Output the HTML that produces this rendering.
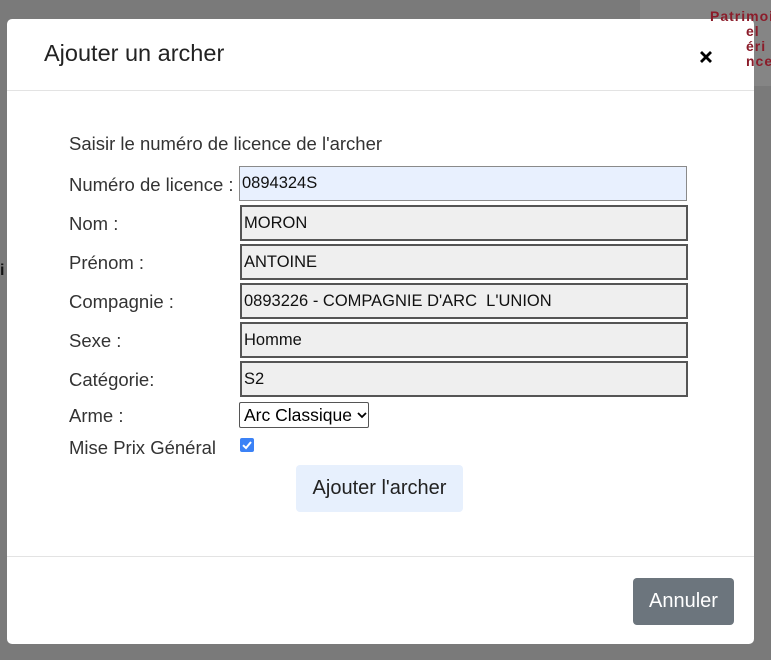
<!DOCTYPE html>
<html><head><meta charset="utf-8"><style>
body{margin:0;width:771px;height:660px;overflow:hidden;background:#7a7a7a;font-family:"Liberation Sans",sans-serif;position:relative}
.tr{position:absolute;left:640px;top:0;width:131px;height:86px;background:#858585}
.trt{position:absolute;color:#8b1c2a;font-size:14px;line-height:14px;font-weight:bold;letter-spacing:1px;z-index:5}
.modal{position:absolute;left:7px;top:19px;width:747px;height:625px;background:#fff;border-radius:5px}
.abs{position:absolute}
h5{position:absolute;left:37px;top:21px;margin:0;font-size:23.5px;font-weight:normal;color:#222}
.lbl{position:absolute;left:62px;font-size:18.5px;color:#333;margin-top:-2px}
.in{position:absolute;left:233px;border:2px solid #555;background:#efefef;box-sizing:border-box;font-size:16.5px;color:#111;padding:7px 2px;line-height:18px;width:448px;height:36px}
</style></head><body>
<div class="tr"></div>
<div class="trt" style="left:710px;top:9px">Patrimoin</div>
<div class="trt" style="left:746px;top:24px">el</div>
<div class="trt" style="left:746px;top:39px">éri</div>
<div class="trt" style="left:746px;top:54px">nce</div>
<div class="abs" style="left:0;top:262px;color:#111;font-weight:bold;font-size:16px">i</div>
<div class="modal">
<h5>Ajouter un archer</h5>
<svg class="abs" style="left:692px;top:31px" width="14" height="14" viewBox="0 0 14 14"><path d="M2 2L12 12M12 2L2 12" stroke="#000" stroke-width="2.8"/></svg>
<div class="abs" style="left:0;top:71px;width:747px;border-top:1px solid #e3e3e3"></div>
<div class="lbl" style="top:116px">Saisir le numéro de licence de l'archer</div>
<div class="lbl" style="top:157px">Numéro de licence :</div>
<div class="in" style="top:147px;left:232px;border:1px solid #8a8a8a;background:#e8f0fe;height:35px">0894324S</div>
<div class="lbl" style="top:196px">Nom :</div>
<div class="in" style="top:186px">MORON</div>
<div class="lbl" style="top:235px">Prénom :</div>
<div class="in" style="top:225px">ANTOINE</div>
<div class="lbl" style="top:274px">Compagnie :</div>
<div class="in" style="top:264px">0893226 - COMPAGNIE D'ARC&nbsp; L'UNION</div>
<div class="lbl" style="top:313px">Sexe :</div>
<div class="in" style="top:303px">Homme</div>
<div class="lbl" style="top:352px">Catégorie:</div>
<div class="in" style="top:342px">S2</div>
<div class="lbl" style="top:388px">Arme :</div>
<div class="abs" style="left:232px;top:383px;border:1px solid #555;border-radius:2px;font-size:17.5px;line-height:24px;padding-left:4px;box-sizing:border-box;width:130px;height:26px">Arc Classique</div>
<svg class="abs" style="left:350px;top:392px" width="10" height="8" viewBox="0 0 10 8"><path d="M1 2L5 6L9 2" stroke="#000" stroke-width="1.8" fill="none"/></svg>
<div class="lbl" style="top:420px">Mise Prix Général</div>
<div class="abs" style="left:233px;top:419px;width:14px;height:14px;background:#3b82f6;border-radius:2px"></div>
<svg class="abs" style="left:233px;top:419px" width="14" height="14" viewBox="0 0 14 14"><path d="M3 7.2L6 10L11 4" stroke="#fff" stroke-width="2" fill="none"/></svg>
<div class="abs" style="left:289px;top:446px;width:167px;height:47px;background:#e7f0fd;border-radius:4px;font-size:20px;line-height:47px;text-align:center;color:#222">Ajouter l'archer</div>
<div class="abs" style="left:0;top:537px;width:747px;border-top:1px solid #e3e3e3"></div>
<div class="abs" style="left:626px;top:559px;width:101px;height:47px;background:#6c757d;border-radius:4px;font-size:20px;line-height:47px;text-align:center;color:#fff">Annuler</div>
</div>
</body></html>
